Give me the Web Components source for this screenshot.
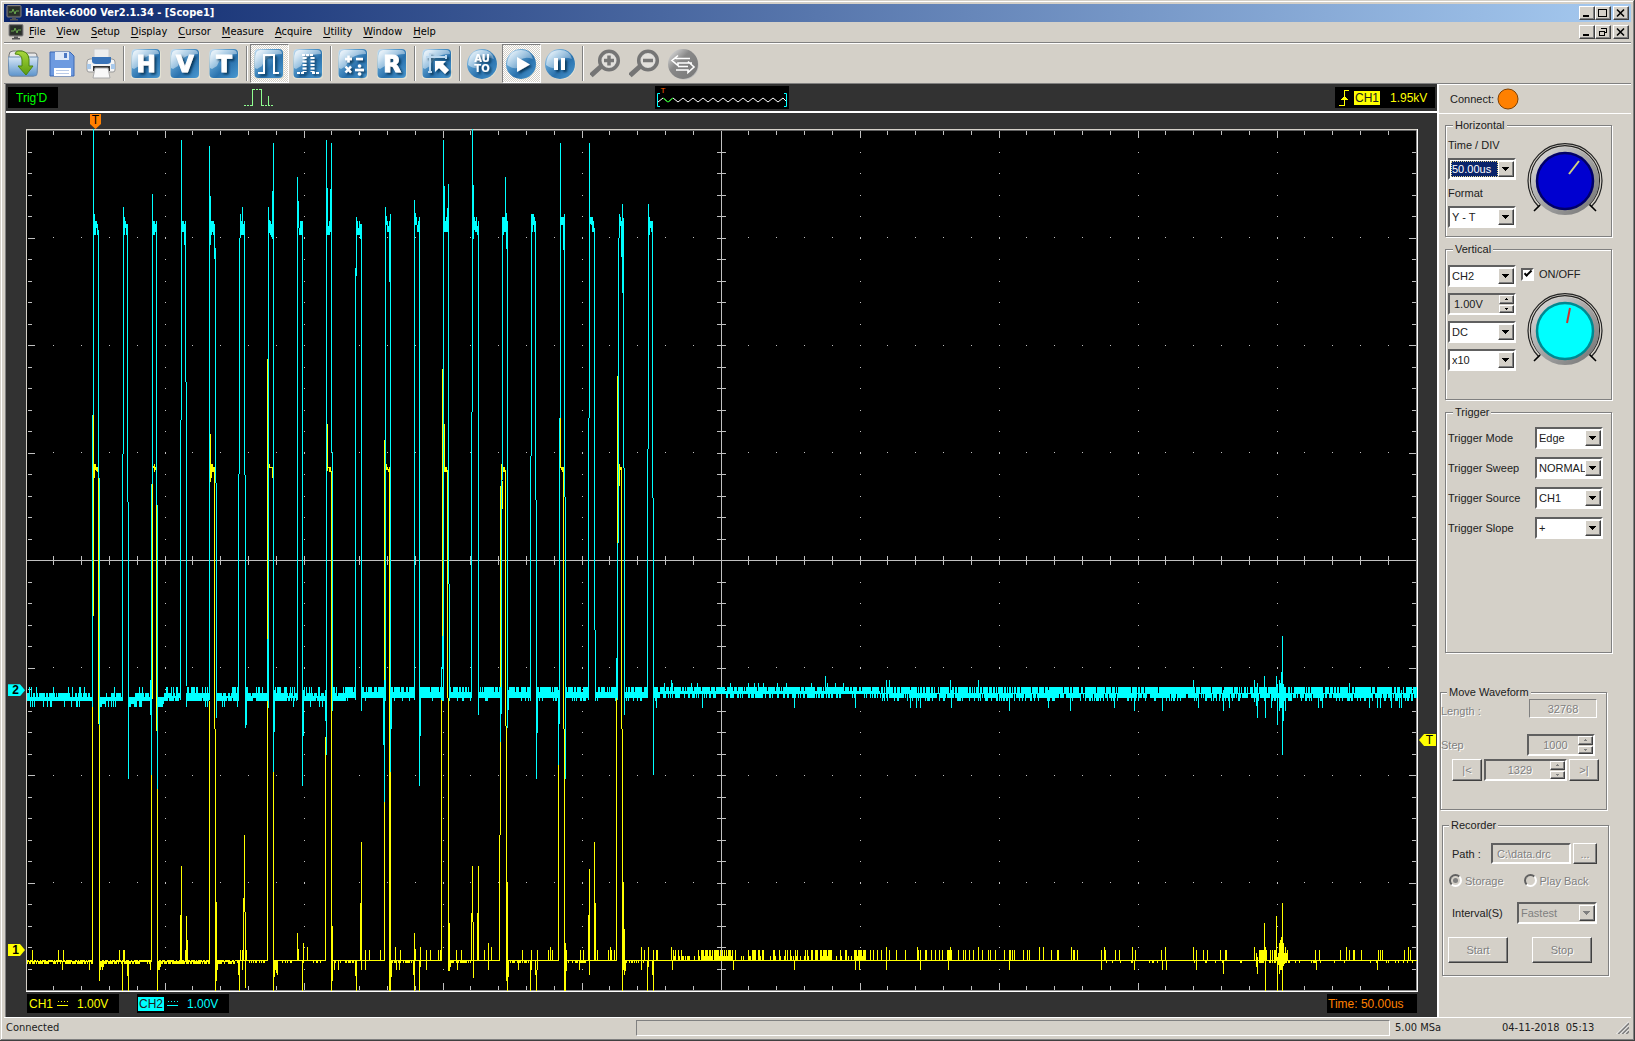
<!DOCTYPE html>
<html lang="en">
<head>
<meta charset="utf-8">
<title>Hantek-6000 Ver2.1.34 - [Scope1]</title>
<style>
html, body { margin: 0; height: 100%; }
body { background: #d4d0c8; overflow: hidden; }
</style>
</head>
<body>
<app-window></app-window>
<script>
const BASE = `
*, *::before, *::after { box-sizing: border-box; }
:host { display: block; box-sizing: border-box; --face: #d4d0c8; --ui: "DejaVu Sans Condensed", "DejaVu Sans", sans-serif; --arial: "Liberation Sans", Arial, sans-serif; }
button, input, select { font: inherit; color: inherit; margin: 0; border-radius: 0; outline: 0; }
button { display: flex; align-items: center; justify-content: center; padding: 0; border: 0; background: none; }
svg { display: block; }
.raised { background: var(--face); border: 1px solid; border-color: #fff #404040 #404040 #fff; box-shadow: inset -1px -1px #808080; }
.sunken { border: 2px solid; border-color: #606060 #fff #fff #606060; }
.off { color: #808080; text-shadow: 1px 1px #fff; }
`;
function define(name, css, html, ready) {
  customElements.define(name, class extends HTMLElement {
    connectedCallback() {
      if (this.shadowRoot) return;
      const root = this.attachShadow({ mode: 'open' });
      root.innerHTML = '<style>' + BASE + css + '</style>' + (typeof html === 'function' ? html(this) : html);
      if (ready) ready(root, this);
    }
  });
}

/* ---------- window chrome ---------- */
const MONITOR = `<svg width="16" height="16" viewBox="0 0 16 16"><rect x="1" y="0.500" width="14" height="11.500" rx="1" fill="#3a3a3a" stroke="#808080"/><rect x="2.500" y="2" width="11" height="8.500" fill="#283028"/><path d="M3 7h3l1-3 2 5 1-3h3" stroke="#6aa84f" fill="none"/><path d="M6 12.500h4v1.500h2v1.500H4V14h2z" fill="#555"/></svg>`;

define('window-buttons', `
:host { display: flex; }
button { width: 16px; height: 14px; }
button:last-child { margin-left: 2px; }`,
el => `
<button class="raised" aria-label="Minimize"><svg width="12" height="10"><path d="M2 8h6" stroke="#000" stroke-width="2"/></svg></button>
<button class="raised" aria-label="Restore"><svg width="12" height="10" shape-rendering="crispEdges" fill="none" stroke="#000">${el.hasAttribute('child')
  ? '<path d="M4.500 1.500h5v4h-2M4 1h6M2.500 4.500h5v4h-5zM2 4h6"/>' : '<path d="M1.500 1.500h8v7h-8zM1 1h9"/>'}</svg></button>
<button class="raised" aria-label="Close"><svg width="12" height="10"><path d="M2 1.500l7 7M9 1.500l-7 7" stroke="#000" stroke-width="1.600"/></svg></button>`);

define('title-bar', `
:host { display: flex; align-items: center; height: 18px; padding: 0 2px; background: linear-gradient(90deg, #0a246a, #a6caf0); color: #fff; font: bold 11px/18px var(--ui); }
span { flex: 1; margin-left: 3px; }`,
`${MONITOR}<span><slot></slot></span><window-buttons></window-buttons>`);

define('menu-bar', `
:host { display: flex; align-items: center; height: 20px; padding: 0 2px 0 4px; font: 11px/20px var(--ui); color: #000; }
nav { display: flex; flex: 1; gap: 11px; margin-left: 5px; }
nav button { line-height: 20px; display: block; }
u { text-underline-offset: 2px; text-decoration-thickness: 1px; }`,
`${MONITOR}<nav>${['File', 'View', 'Setup', 'Display', 'Cursor', 'Measure', 'Acquire', 'Utility', 'Window', 'Help']
  .map(t => `<button><u>${t[0]}</u>${t.slice(1)}</button>`).join('')}</nav><window-buttons child></window-buttons>`);

/* ---------- toolbar ---------- */
const DEFS = `<defs>
<linearGradient id="b" x1="0" y1="0" x2="1" y2="1"><stop offset="0" stop-color="#cfe3f3"/><stop offset=".3" stop-color="#5c9fd0"/><stop offset=".6" stop-color="#2a72ad"/><stop offset="1" stop-color="#4b9ad2"/></linearGradient>
<linearGradient id="s" x1="0" y1="0" x2="1" y2="1"><stop offset="0" stop-color="#fff" stop-opacity=".8"/><stop offset="1" stop-color="#fff" stop-opacity=".1"/></linearGradient>
<linearGradient id="g" x1="0" y1="0" x2="0" y2="1"><stop offset="0" stop-color="#a8d83c"/><stop offset="1" stop-color="#5c9c10"/></linearGradient>
<linearGradient id="f" x1="0" y1="0" x2="0" y2="1"><stop offset="0" stop-color="#d8e8f6"/><stop offset="1" stop-color="#5c94cc"/></linearGradient>
<linearGradient id="k" x1="0" y1="0" x2="1" y2="1"><stop offset="0" stop-color="#eee"/><stop offset=".4" stop-color="#888"/><stop offset="1" stop-color="#777"/></linearGradient>
<filter id="d" x="-20%" y="-20%" width="150%" height="150%"><feDropShadow dx="2" dy="2" stdDeviation="1.300" flood-color="#06294a" flood-opacity=".8"/></filter></defs>`;
const icon = body => `<svg width="32" height="32" viewBox="1 0 32 32">${DEFS}${body}</svg>`;
const tile = body => icon(`<path d="M4 31q-3 0-3-3V5l3-3 22-1q5 0 5 5v22q0 3-3 3z" fill="#e4e2d4"/><rect x="1.500" y="1" width="28.500" height="29" rx="4" fill="url(#b)"/><path d="M2 12Q2 2 7 2h18q4 0 4 4-16 0-20 12l-5 3-2-1z" fill="url(#s)"/><g filter="url(#d)" fill="#fff" stroke="none">${body}</g>`);
const ball = body => icon(`<circle cx="17" cy="17" r="14.500" fill="#e4e2d4"/><circle cx="16" cy="16" r="15" fill="url(#b)"/><path d="M2 17Q3 2 16 2q10 0 12 9-14-5-16 9-4 1-10-3z" fill="url(#s)"/><g filter="url(#d)" fill="#fff">${body}</g>`);
const letter = c => tile(`<text x="16" y="24" text-anchor="middle" font-family="DejaVu Sans" font-weight="bold" font-size="23" stroke="#fff" stroke-width="1">${c}</text>`);
const lens = sign => icon(`<path d="M2 27.500L12.500 18" stroke="#757575" stroke-width="5"/><circle cx="20" cy="12.500" r="9.300" fill="#d8d8d6" stroke="#757575" stroke-width="3.500"/><circle cx="20" cy="12.500" r="6.800" fill="#e2e0dc"/><path d="${sign}" stroke="#777" stroke-width="3.500"/>`);
const TOOLS = [
  ['Open', icon(`<path d="M2 7q0-4 4-4h9l3 2h10q2 0 2 3v16q0 4-4 4H4q-2 0-2-4z" fill="#e8e8e8" stroke="#777"/><path d="M1 9h30l-1 17q0 2-3 2H5q-3 0-3-2z" fill="url(#f)" stroke="#6c8cb0"/><path d="M11 3q10-1 11 8v7h4l-7 9-8-9h4v-6q0-6-7-6 1-3 3-3z" fill="url(#g)" stroke="#4c8410"/>`)],
  ['Save', icon(`<path d="M4 4h20l4 4v20H4z" fill="#6d9ae0" stroke="#3c68b4"/><path d="M9 4h14v8H9z" fill="#dfe9f8"/><path d="M18 5h3v5h-3z" fill="#4c78c4"/><path d="M8 20h17v8H8z" fill="#fff"/><path d="M10 22.500h13M10 25.500h13" stroke="#b9cbe8"/>`)],
  ['Print', icon(`<path d="M9 1h15v10H9z" fill="#eee" stroke="#ccc"/><path d="M2 14q0-3 3-3h22q3 0 3 3v8q0 2-2 2H4q-2 0-2-2z" fill="#f4f4f4" stroke="#999"/><path d="M7 9h19v4q0 3-4 3H11q-4 0-4-3z" fill="#3973b8"/><path d="M8 18h17v5H8z" fill="#333"/><path d="M10 20h13l2 10H8z" fill="#f8f8f8" stroke="#aaa"/><path d="M2 16h4v5H2zM26 16h4v5h-4z" fill="#a8c8ea"/>`)],
  '|',
  ['Horizontal', letter('H')], ['Vertical', letter('V')], ['Trigger', letter('T')],
  '|',
  ['Line', tile('<path d="M5 25h6V7h10v18h5" fill="none" stroke="#fff" stroke-width="2"/>'), 1],
  ['Dots', tile('<path d="M5 25h7M20 25h7M10 7h12" stroke="#fff" stroke-width="2" stroke-dasharray="3 1"/><path d="M12.500 9v15M20.500 9v15" stroke="#fff" stroke-width="4" stroke-dasharray="2 1.500"/>')],
  '|',
  ['Math', tile('<path d="M8 11h7M11.500 7.500v7M19 11h7M8.500 18.500l5.500 6M14 18.500l-5.500 6M18 22h9" stroke="#fff" stroke-width="2.500" fill="none"/><circle cx="22.500" cy="18" r="1.800"/><circle cx="22.500" cy="26" r="1.800"/>')],
  ['Reference', letter('R')],
  '|',
  ['Cursor', tile('<path d="M5 9h20M9 5v20M25 7v4M7 24h4" stroke="#bcd8ee" stroke-width="2"/><path d="M14 13h11l-3 3 6 6-4 4-6-6-4 4z"/>')],
  '|',
  ['Auto', ball('<text font-family="DejaVu Sans" font-weight="bold" font-size="10" text-anchor="middle"><tspan x="16" y="14">AU</tspan><tspan x="16" y="24">TO</tspan></text>')],
  ['Run', ball('<path d="M12 9l13 7.500L12 24z"/>'), 1],
  ['Pause', ball('<path d="M10 10h4v12h-4zM17 10h4v12h-4z"/>')],
  '|',
  ['Zoom in', lens('M15 12.500h10M20 7.500v10')], ['Zoom out', lens('M15 12.500h10')],
  ['Swap', icon('<circle cx="17" cy="17" r="14.500" fill="#bbb"/><circle cx="16" cy="16" r="15" fill="url(#k)"/><path d="M11 7.500L5 12.500l6 5V15h14M9 10.500h14M21 13.500l6 5.500-6 5.500V22H9M11 18.500h10" fill="none" stroke="#fff" stroke-width="1.600"/>')]
];
define('tool-bar', `
:host { display: flex; flex: none; height: 41px; border-top: 1px solid #808080; box-shadow: inset 0 1px #fff; padding-top: 1px; }
button { width: 39px; height: 39px; border: 1px solid transparent; }
button.on { border-color: #808080 #fff #fff #808080; background: repeating-conic-gradient(#fff 0 25%, #d4d0c8 0 50%) 0 0 / 2px 2px; }
i { width: 6px; margin: 2px 0; display: flex; justify-content: center; }
i::before { content: ""; width: 2px; background: linear-gradient(90deg, #808080 50%, #fff 50%); }`,
TOOLS.map(t => t === '|' ? '<i></i>' : `<button aria-label="${t[0]}"${t[2] ? ' class="on"' : ''}>${t[1]}</button>`).join(''));

/* ---------- form controls ---------- */
define('combo-box', `
:host { font: 11px/14px var(--arial); width: 68px; }
:host([label]) { width: auto; display: flex; align-items: center; justify-content: space-between; }
:host([stack]) { flex-direction: column; align-items: flex-start; gap: 6px; }
.box { display: flex; width: var(--combo, 68px); height: 22px; background: #fff; padding: 1px 0 1px 1px; }
:host([disabled]) .box { background: var(--face); }
select { flex: 1; min-width: 0; appearance: none; border: 0; padding: 0 0 0 1px; background: none; opacity: 1; }
:host([disabled]) select { color: #808080; }
:host([chosen]) select { background: #0a246a; color: #fff; outline: 1px dotted #e8d890; outline-offset: -1px; }
:host([chosen]) option { background: #fff; color: #000; }
svg { width: 16px; height: 16px; pointer-events: none; }`,
el => {
  const off = el.hasAttribute('disabled'), label = el.getAttribute('label');
  return `${label ? `<label for="s">${label}</label>` : ''}
<div class="box sunken"><select id="s"${label ? '' : ` aria-label="${el.getAttribute('name')}"`}${off ? ' disabled' : ''}>${el.getAttribute('options').split('|').map(o => `<option>${o}</option>`).join('')}</select>
<svg class="raised" viewBox="0 0 14 14" shape-rendering="crispEdges"><path d="M3 5h7v1h-1v1h-1v1h-1v1h-1v-1h-1v-1h-1v-1h-1z" fill="${off ? '#808080' : '#000'}"/></svg></div>`;
});

define('spin-box', `
:host { width: 68px; font: 11px/14px var(--arial); }
.box { display: flex; height: 22px; }
input { flex: 1; min-width: 0; border: 0; background: none; padding: 0 0 0 4px; }
:host([disabled]) input { text-align: center; }
.btns { width: 15px; display: flex; flex-direction: column; gap: 1px; }
.btns button { flex: 1; min-height: 0; }`,
el => {
  const off = el.hasAttribute('disabled') ? ' disabled' : '', c = off ? '#808080' : '#000';
  return `<div class="box sunken"><input class="${off ? 'off' : ''}" value="${el.getAttribute('value')}" aria-label="${el.getAttribute('name')}"${off}>
<div class="btns"><button class="raised" aria-label="Up"${off}><svg width="5" height="2" shape-rendering="crispEdges"><path d="M2 0h1v1h1v1h-3v-1h1z" fill="${c}"/></svg></button>
<button class="raised" aria-label="Down"${off}><svg width="5" height="2" shape-rendering="crispEdges"><path d="M1 0h3v1h-1v1h-1v-1h-1z" fill="${c}"/></svg></button></div></div>`;
});

define('group-box', `
:host { width: 167px; }
fieldset { margin: 0; min-width: 0; padding: 0 0 0 var(--inset, 2px); border: 1px solid #808080; box-shadow: 1px 1px #fff, inset 1px 1px #fff; font: 11px/14px var(--arial); }
legend { margin-left: var(--legend, 5px); padding: 0 2px; background: var(--face); height: 14px; }`,
el => `<fieldset><legend>${el.getAttribute('caption')}</legend><slot></slot></fieldset>`);

define('knob-dial', `:host { width: 78px; height: 78px; }`, el => `
<svg width="78" height="78" viewBox="0 0 78 78"><defs><linearGradient id="m" x1="0" y1="0" x2="1" y2="1"><stop offset="0" stop-color="#e0e0e0"/><stop offset=".5" stop-color="#a4a4a4"/><stop offset="1" stop-color="#707070"/></linearGradient></defs>
<path d="M13 65A37 37 0 1 1 65 65M15 63A34.500 34.500 0 1 1 63 63" fill="none" stroke="#222" stroke-width="1.200"/>
<path d="M14 63l-6 6M63 62l7 7" stroke="#000" stroke-width="1.600"/>
<circle cx="39" cy="39" r="34" fill="url(#m)"/><circle cx="39" cy="39" r="28" fill="${el.getAttribute('color')}" stroke="${el.getAttribute('rim')}" stroke-width="2.500"/>
<path d="${el.getAttribute('hand')}" stroke="${el.getAttribute('ink')}" stroke-width="2"/></svg>`);

/* ---------- side panel ---------- */
define('side-panel', `
:host { width: 194px; flex: none; border-left: 2px solid #fff; font: 11px/14px var(--arial); color: #202020; }
.connect { display: flex; align-items: center; gap: 3px; height: 30px; padding-left: 11px; border-top: 1px solid #fff; border-bottom: 1px solid #fff; font-size: 11px; }
.groups { display: flex; flex-direction: column; padding: 4px 0 0 6px; gap: 5px; }
.cols { display: flex; gap: 5px; }
.stack { display: flex; flex-direction: column; gap: 6px; }
.h { padding: 6px 0 8px; }
.h knob-dial { margin: 4px 0 0 5px; }
.v { padding: 9px 0 28px; }
.v .side { padding-top: 2px; }
.v label { display: flex; align-items: center; gap: 5px; margin-bottom: 11px; }
.v knob-dial { margin-left: 5px; }
.tick { appearance: none; width: 13px; height: 13px; background: #fff; display: grid; place-items: center; }
.tick:checked::after { content: ""; width: 8px; height: 4px; border: solid #000; border-width: 0 0 2px 2px; transform: rotate(-45deg) translate(1px, -1px); }
.t { display: flex; flex-direction: column; gap: 8px; padding: 8px 8px 113px 0; }
.move { margin: 27px 0 3px -5px; --inset: 0px; --legend: 6px; }
.rec { margin-left: -3px; --inset: 0px; --legend: 6px; }
.row { display: flex; align-items: center; justify-content: space-between; }
.m .row:first-child { height: 19px; padding-right: 9px; }
.m .row:first-child label { padding-top: 4px; }
.m .row:nth-child(2) { margin-top: 16px; padding-right: 11px; }
.m .row:nth-child(3) { margin: 3px 7px 28px 11px; }
.len { width: 68px; height: 19px; text-align: center; background: none; border: 1px solid; border-color: #808080 #fff #fff #808080; }
.m button { width: 30px; height: 22px; }
.m .wide { width: 83px; }
.r { padding: 11px 11px 12px 9px; display: flex; flex-direction: column; }
.path { height: 21px; width: 80px; background: none; padding: 0 0 0 4px; }
.path + button { width: 24px; height: 21px; margin-left: -8px; }
.radios { display: flex; gap: 20px; height: 15px; margin: 9px 0 14px -3px; }
.radios label { display: flex; align-items: center; gap: 3px; }
.radios input { appearance: none; width: 13px; height: 13px; border: 2px solid; border-color: #606060 #fff #fff #606060; border-radius: 50%; display: grid; place-items: center; }
.radios input:checked::after { content: ""; width: 5px; height: 5px; border-radius: 50%; background: #808080; }
.r combo-box { --combo: 80px; }
.acts { display: flex; gap: 24px; margin: 13px 0 0 -4px; }
.acts button { width: 60px; height: 26px; }`,
`<div class="connect">Connect:<svg width="22" height="22"><circle cx="11" cy="11" r="10" fill="#ff8000" stroke="#804000"/></svg></div>
<div class="groups">
<group-box caption="Horizontal"><div class="cols h"><div class="stack">
<combo-box stack chosen label="Time / DIV" options="50.00us|100.0us|200.0us"></combo-box>
<combo-box stack label="Format" options="Y - T|X - Y"></combo-box></div>
<knob-dial color="#0000d0" rim="#000068" ink="#d0d080" hand="M43 32L53 19"></knob-dial></div></group-box>
<group-box caption="Vertical"><div class="cols v"><div class="stack">
<combo-box name="Channel" options="CH2|CH1"></combo-box>
<spin-box name="Volts per division" value="1.00V"></spin-box>
<combo-box name="Coupling" options="DC|AC|GND"></combo-box>
<combo-box name="Probe" options="x10|x1|x100"></combo-box></div>
<div class="side"><label><input class="tick sunken" type="checkbox" checked>ON/OFF</label>
<knob-dial color="#00ffff" rim="#008890" ink="#d03030" hand="M41 31L44 16"></knob-dial></div></div></group-box>
<group-box caption="Trigger"><div class="t">
<combo-box label="Trigger Mode" options="Edge|Pulse|Video"></combo-box>
<combo-box label="Trigger Sweep" options="NORMAL|AUTO|SINGLE"></combo-box>
<combo-box label="Trigger Source" options="CH1|CH2"></combo-box>
<combo-box label="Trigger Slope" options="+|-"></combo-box></div></group-box>
<group-box class="move" caption="Move Waveform"><div class="m">
<div class="row"><label class="off" for="len">Length :</label><input id="len" class="len off" value="32768" disabled></div>
<div class="row"><span class="off">Step</span><spin-box name="Step" value="1000" disabled></spin-box></div>
<div class="row"><button class="raised off" disabled>|&lt;</button><spin-box class="wide" name="Position" value="1329" disabled></spin-box><button class="raised off" disabled>&gt;|</button></div>
</div></group-box>
<group-box class="rec" caption="Recorder"><div class="r">
<div class="row"><label for="path">Path :</label><input id="path" class="path sunken off" value="C:\\data.drc" disabled><button class="raised off" disabled>...</button></div>
<div class="radios off"><label><input type="radio" name="mode" checked disabled>Storage</label><label><input type="radio" name="mode" disabled>Play Back</label></div>
<combo-box label="Interval(S)" options="Fastest" disabled></combo-box>
<div class="acts"><button class="raised off" disabled>Start</button><button class="raised off" disabled>Stop</button></div>
</div></group-box></div>`);

/* ---------- oscilloscope ---------- */
/* Columns of each trace as "x top bottom", one sample column per entry. */
const CH2 = `92 415 700,93 129 415,94 214 235,95 221 235,96 221 228,97 224 235,98 230 478,99 478 725,
122 454 700,123 207 454,124 217 235,125 221 228,126 224 235,127 224 502,128 502 779,
150 680 715,151 484 775,152 194 484,153 221 235,154 221 235,155 224 232,156 221 505,157 505 789,
180 420 700,181 140 420,182 221 232,183 221 232,184 224 245,185 221 382,186 382 686,
209 146 700,210 196 245,211 221 235,212 221 232,213 221 235,214 224 259,215 248 483,216 483 718,
238 474 700,239 238 474,240 214 238,241 221 235,242 207 235,243 224 235,244 221 475,245 475 728,246 690 725,
267 639 700,268 207 708,269 220 233,270 221 235,271 224 237,272 191 239,273 143 772,274 690 732,
297 177 700,298 201 228,299 228 235,300 221 235,301 221 235,302 221 786,303 690 736,
325 690 721,326 140 755,327 188 235,328 226 235,329 221 235,330 189 232,331 143 452,332 452 711,
355 268 700,356 217 276,357 221 235,358 228 235,359 221 235,360 224 239,361 224 711,
383 690 745,384 680 802,385 207 701,386 216 225,387 221 232,388 226 232,389 221 282,390 214 772,391 690 729,
414 200 700,415 213 225,416 217 225,417 225 232,418 221 232,419 217 786,420 690 736,
441 667 700,442 636 669,443 140 701,444 186 232,445 221 232,446 217 232,447 208 232,448 184 584,449 584 701,
471 412 694,472 129 412,473 185 239,474 217 230,475 221 232,476 217 232,477 226 235,478 221 715,
500 687 742,501 480 714,502 217 480,503 217 235,504 217 232,505 177 232,506 213 249,507 221 728,508 690 710,
530 456 694,531 214 456,532 214 232,533 214 225,534 217 232,535 221 500,536 500 779,537 690 733,
558 690 765,559 418 724,560 143 418,561 217 225,562 217 225,563 217 250,564 214 497,565 497 779,
588 418 700,589 143 418,590 217 224,591 217 225,592 217 232,593 221 232,594 228 630,595 630 701,
616 658 698,617 543 700,618 238 543,619 214 238,620 217 226,621 221 257,622 204 293,623 218 468,624 468 715,
647 449 694,648 204 449,649 217 235,650 221 228,651 221 232,652 221 498,653 498 775,656 690 708,
671 680 694,702 690 708,794 690 708,825 676 694,855 690 708,886 680 694,889 680 694,910 690 708,916 690 708,920 690 708,950 680 698,951 690 708,978 680 694,1009 690 711,1048 690 708,1070 690 711,1114 690 708,1134 690 711,1162 690 711,1193 680 694,1198 690 708,1223 690 711,1229 690 708,
1254 680 702,1256 690 706,1257 683 718,1264 676 694,1265 690 718,1271 690 708,1276 676 694,1277 684 725,1279 680 711,1280 683 708,1281 672 708,1282 636 755,1283 684 721,1284 687 700,1285 687 711,1318 690 708,1322 690 708,1349 683 698,1369 690 708,1377 690 708,1380 690 708,1391 690 708,1399 690 708,1401 690 708`;
const CH1 = `92 701 961,93 415 616,94 464 478,95 464 470,96 467 471,97 467 472,98 478 724,99 725 981,100 961 970,101 961 967,102 961 970,103 961 967,
151 775 961,152 484 699,153 466 468,154 464 472,155 467 470,156 505 731,157 789 991,158 961 970,159 961 970,160 961 967,
209 701 961,210 434 482,211 464 478,212 464 472,213 467 472,214 467 729,215 729 991,216 902 981,217 961 970,
267 359 961,268 464 467,269 464 468,270 467 468,271 467 468,272 467 478,273 772 991,274 961 977,275 961 970,276 961 973,277 961 975,
325 737 961,327 424 471,328 467 468,329 467 472,330 467 472,331 471 991,332 926 981,334 961 970,338 961 970,
384 440 961,386 464 470,387 467 470,388 469 472,389 467 991,390 772 991,391 961 977,
441 698 961,442 369 636,444 424 472,445 467 472,446 467 472,447 470 698,448 698 971,449 923 971,450 961 967,
499 835 961,500 486 835,501 464 480,502 481 509,503 467 472,504 467 472,505 470 726,506 726 981,507 882 991,508 961 977,
558 765 961,560 418 468,561 467 470,562 467 472,563 467 729,564 729 991,565 943 991,566 950 971,
616 698 961,617 376 543,619 464 486,620 467 470,621 467 729,622 729 991,623 882 970,624 929 975,625 961 971,
32 950 961,58 950 961,63 950 961,62 961 970,89 961 970,119 950 961,123 950 961,124 950 961,122 961 991,127 961 976,128 961 991,150 961 970,
180 915 961,181 866 961,186 916 961,185 950 961,187 940 961,238 961 975,239 961 991,240 950 961,242 950 970,243 898 961,244 835 912,245 912 988,246 950 961,
297 933 961,298 949 961,302 961 991,303 943 961,307 947 961,355 961 976,356 961 991,360 903 961,361 842 970,365 950 970,369 950 961,380 950 961,
395 947 961,396 961 970,400 950 961,399 961 970,413 961 975,414 933 991,415 949 961,419 961 991,420 947 967,426 950 970,430 950 961,438 950 961,440 950 961,456 950 961,457 961 970,461 950 961,
471 913 961,472 866 922,473 922 978,477 913 961,478 866 961,484 950 961,488 943 970,491 947 961,522 950 961,518 961 970,530 961 991,531 950 970,535 961 975,536 970 991,537 950 970,548 950 961,550 947 961,552 950 961,
580 950 961,583 950 961,579 961 970,588 915 961,589 869 975,594 842 961,595 903 961,597 950 961,608 950 961,610 947 961,611 950 961,614 950 961,641 947 970,644 950 961,647 961 991,648 947 967,652 961 975,653 950 991,656 950 961,657 950 961,
671 947 961,672 961 970,733 961 970,794 961 970,855 961 970,859 961 970,870 950 961,873 950 961,877 950 961,881 950 961,886 947 970,889 950 961,896 950 961,905 950 961,917 947 961,918 950 961,920 950 970,925 950 961,926 950 961,931 950 961,935 950 961,939 950 961,942 950 961,947 950 961,948 950 970,949 950 961,950 947 961,951 950 961,958 950 961,963 950 961,965 950 961,969 950 961,973 950 961,978 947 961,982 950 961,988 950 961,990 950 961,995 950 961,1004 950 961,1009 950 970,1010 950 961,1012 950 961,1014 950 961,1023 950 961,1027 950 961,1029 950 961,1039 947 961,1043 947 961,1051 950 961,1057 950 961,1058 950 961,1071 947 961,1073 950 961,1074 950 961,1077 950 961,1101 950 970,1104 947 961,1105 950 961,1115 950 961,1119 950 961,1132 947 961,1134 961 970,1135 950 961,1161 950 961,1162 961 970,1165 947 961,1166 961 970,1193 947 961,1196 950 970,1203 950 961,1207 950 961,1220 950 961,1223 961 974,1225 950 961,1226 950 961,
1254 947 961,1256 953 967,1257 957 974,1259 950 963,1260 950 963,1261 950 963,1262 950 963,1263 950 963,1264 923 961,1265 947 991,1266 950 961,1270 950 963,1272 950 963,1274 950 963,1275 950 963,1276 916 961,1277 957 991,1278 953 965,1279 943 974,1280 940 970,1281 937 970,1282 903 991,1283 943 966,1284 953 964,1285 947 963,1286 953 963,1287 950 961,1315 950 961,1316 961 970,1319 950 961,1340 950 961,1346 947 961,1349 950 961,1353 950 961,1354 950 961,1361 950 961,1377 961 970,1378 950 961,1380 950 961,1382 950 961,1404 950 961,1408 947 961,1410 950 961`;
const HIGH2 = [[93, 98], [123, 127], [152, 156], [181, 185], [209, 215], [239, 244], [268, 272], [297, 301], [327, 331], [356, 360], [385, 389], [414, 418], [443, 448], [472, 477], [502, 506], [531, 535], [560, 564], [589, 594], [618, 623], [648, 652]];
const HIGH1 = [[93, 98], [152, 156], [210, 214], [268, 272], [326, 330], [385, 388], [442, 447], [500, 505], [559, 563], [617, 621]];
const inside = (list, x) => list.some(([a, b]) => x >= a && x <= b);
const bar = (x, a, b) => `M${x} ${a}h1V${b}h-1z`;
const columns = s => s.split(',').map(c => bar(...c.trim().split(' ').map(Number))).join('');

function traces() {
  let seed = 7;
  const rnd = () => (seed = (seed * 1103515245 + 12345) % 2147483648) / 2147483648;
  let c1 = columns(CH1), c2 = columns(CH2);
  for (let x = 27; x < 1417; x++) {
    if (!inside(HIGH2, x)) {
      let top, bottom, r = rnd(), q = rnd();
      if (x < 165) { top = r < .1 ? 687 : r < .7 ? 693 : 697; bottom = q < .2 ? 707 : 701; }
      else if (x < 345) { top = r < .35 ? 687 : r < .85 ? 693 : 696; bottom = q < .06 ? 707 : q < .2 ? 698 : 701; }
      else if (x < 660) { top = r < .75 ? 687 : 692; bottom = q < .2 ? 701 : 698; }
      else if (x < 880) { top = r < .06 ? 683 : r < .85 ? 687 : 691; bottom = q < .45 ? 698 : 694; }
      else { top = r < .8 ? 687 : 693; bottom = q < .25 ? 701 : q < .85 ? 698 : 694; }
      const after = HIGH2.find(h => x > h[1] && x < h[1] + 8);
      if (after && x < 165) { top = 697; bottom = q < .5 ? 707 : 704; }
      c2 += bar(x, top, bottom);
    }
    if (!inside(HIGH1, x)) {
      const q = rnd(), r = rnd();
      let top = 960, bottom = 961;
      if (x < 235) { bottom = q < .75 ? 964 : 962; if (q > .3) top = 960; else top = 961; }
      else if (x < 345) bottom = q < .2 ? 963 : 961;
      else if (x < 650) { const near = HIGH1.some(h => x > h[1] && x < h[1] + 24); bottom = near && q < .7 ? 963 : 961; }
      else if (x > 672 && x < 866) { const dense = x > 698 && x < 732 || x > 820 && x < 832 || x > 854; top = r < (dense ? .65 : .3) ? 950 : r < (dense ? .95 : .5) ? 956 : 960; }
      else if (x > 1090 && q < .12) bottom = 963;
      c1 += bar(x, top, bottom);
    }
  }
  return [c1, c2];
}
function graticule() {
  let d = bar(721, 131, 990) + 'M27 560H1416v1H27z';
  for (let i = 1; i < 50; i++) {
    const x = Math.floor(26 + 27.8 * i), big = i % 5 === 0, n = big ? 7 : 4;
    d += bar(x, 131, 131 + n) + bar(x, 990 - n, 990) + bar(x, 556, 565);
    for (const y of [237, 345, 452, 667, 775, 882]) d += bar(x, y, y + 1);
  }
  for (let j = 1; j < 40; j++) {
    if (j === 20) continue;
    const y = Math.floor(130.5 + 21.5 * j), n = j % 5 === 0 ? 7 : 4;
    d += `M28 ${y}h${n}v1h-${n}zM${1416 - n} ${y}h${n}v1h-${n}zM717 ${y}h9v1h-9z`;
    for (let i = 1; i < 10; i++) d += bar(26 + 139 * i, y, y + 1);
  }
  return d;
}
define('scope-plot', `svg { width: 100%; height: 100%; }`, () => {
  const [c1, c2] = traces();
  return `<svg viewBox="26 129 1392 863" preserveAspectRatio="none" shape-rendering="crispEdges" role="img" aria-label="Channel traces">
<path d="M26 129h1392v863H26z" fill="#000"/>
<path d="M26 130h1391v1H27v860h-1z" fill="#606060"/><path d="M26 129h1392v1H27v862h-1z" fill="#d4d0c8"/>
<path d="M1416 130h1v861H27v-1h1389z" fill="#909090"/><path d="M1417 129h1v863H26v-1h1391z" fill="#fff"/>
<path d="${graticule()}" fill="#c0c0c0"/><path d="${c1}" fill="#ff0"/><path d="${c2}" fill="#0ff"/></svg>`;
});

define('mark-tag', `
:host { position: absolute; font: 12px/12px var(--arial); color: #000; text-align: center; }
:host([side=left]) { left: 2px; width: 17px; height: 12px; padding-right: 2px; clip-path: polygon(0 0, 12px 0, 100% 50%, 12px 100%, 0 100%); font-weight: bold; }
:host([side=right]) { right: 1px; width: 17px; height: 12px; padding-left: 4px; clip-path: polygon(5px 0, 100% 0, 100% 100%, 5px 100%, 0 50%); }
:host([side=top]) { top: 1px; width: 11px; height: 15px; clip-path: polygon(0 0, 100% 0, 100% 10px, 50% 100%, 0 10px); }`, '<slot></slot>');

const COUPLING = c => `<svg width="11" height="6" shape-rendering="crispEdges" stroke="${c}"><path d="M0 4.500h11"/><path d="M1 0.500h10" stroke-dasharray="1 2"/></svg>`;
const ZIGZAG = 'M3 16' + 'l5 -4l5 4'.repeat(12) + 'l5 -4l3 3';
define('scope-view', `
:host { flex: 1; min-width: 0; display: flex; flex-direction: column; margin-left: 1px; border-left: 1px solid #808080; background: #323232; font: 12px/14px var(--arial); }
.top { display: grid; grid-template-columns: 1fr auto 1fr; align-items: center; height: 29px; padding: 0 2px; border-bottom: 2px solid #fff; }
.top > div { display: flex; align-items: center; }
.chip { display: flex; align-items: center; background: #000; }
.trig { color: #0f0; height: 21px; width: 50px; padding-left: 8px; margin-right: 186px; }
.level { color: #ff0; height: 21px; width: 100px; margin-left: auto; padding-left: 3px; }
.level b, .foot b { font-weight: normal; padding: 0 1px; color: #202020; }
.level b { background: #ff0; margin: 0 10px 0 5px; }
.map { position: relative; width: 134px; height: 23px; background: #000; }
.map span { position: absolute; left: 6px; top: 0; font: 8px/10px var(--arial); color: #ff6000; }
.body { flex: 1; min-height: 0; position: relative; padding: 16px 19px 0 20px; }
scope-plot { height: 100%; }
.foot { display: flex; align-items: center; height: 25px; padding: 0 20px 2px 21px; gap: 18px; }
.foot .chip { height: 19px; width: 92px; padding-left: 1px; gap: 3px; }
.foot .chip span { margin-left: 6px; }
.foot .time { margin-left: auto; width: 90px; color: #ff8000; }`,
`<div class="top"><div><span class="chip trig">Trig'D</span>
<svg width="30" height="19" shape-rendering="crispEdges" fill="none" stroke="#90ff90"><path d="M0 17.500h8M18 17.500h12M9 1.500h8" stroke-dasharray="2 1"/><path d="M8.500 18V1M17.500 1v17M24.500 8v10"/></svg></div>
<div class="map"><svg width="134" height="23" fill="none"><path d="${ZIGZAG}" stroke="#fff"/><path d="M8 12l5 4 5-4" stroke="#0e0"/><path d="M5 7.500H2.500v13H5M129 7.500h2.500v13H129" stroke="#0ff"/></svg><span>T</span></div>
<div><span class="chip level"><svg width="11" height="18" shape-rendering="crispEdges"><path d="M1 16.500h5.500V1.500H11" fill="none" stroke="#ff0"/><path d="M6 7h1v1h1v1h1v1h1v1H3v-1h1V9h1V8h1z" fill="#ff0"/></svg><b>CH1</b>1.95kV</span></div></div>
<div class="body"><mark-tag side="top" style="left:84px;background:#ff8000">T</mark-tag>
<mark-tag side="left" style="top:65%;background:#0ff">2</mark-tag>
<mark-tag side="left" style="top:calc(95% - 4px);background:#ff0">1</mark-tag>
<mark-tag side="right" style="top:calc(71% - 3px);background:#ff0">T</mark-tag>
<scope-plot></scope-plot></div>
<div class="foot"><div class="chip" style="color:#ff0"><b style="color:#ff0">CH1</b>${COUPLING('#ff0')}<span>1.00V</span></div>
<div class="chip" style="color:#0ff"><b style="background:#0ff">CH2</b>${COUPLING('#0ff')}<span>1.00V</span></div>
<div class="chip time">Time: 50.00us</div></div>`);

define('status-bar', `
:host { display: flex; flex: none; align-items: center; height: 20px; border-top: 1px solid #fff; padding: 0 2px; font: 11px/18px var(--ui); color: #202020; }
.msg { flex: 1 1 0; max-width: 630px; }
.meter { flex: 1 1 125px; height: 16px; border: 1px solid; border-color: #808080 #fff #fff #808080; margin-right: 5px; }
.rate { width: 107px; } .when { width: 114px; white-space: pre; }`,
`<span class="msg">Connected</span><span class="meter"></span><span class="rate">5.00 MSa</span><span class="when">04-11-2018  05:13</span>
<svg width="13" height="13" style="margin-left:auto"><path d="M2 13L13 2M6 13l7-7M10 13l3-3" stroke="#808080" stroke-width="2"/><path d="M0.500 13L13 0.500M4.500 13L13 4.500M8.500 13L13 8.500" stroke="#fff"/></svg>`);

define('app-window', `
:host { height: 100vh; display: flex; flex-direction: column; background: var(--face); padding: 4px; box-shadow: inset -1px -1px #404040, inset 1px 1px #d4d0c8, inset -2px -2px #808080, inset 2px 2px #fff; }
main { flex: 1; min-height: 0; display: flex; border-top: 1px solid #808080; }`,
`<title-bar>Hantek-6000 Ver2.1.34 - [Scope1]</title-bar><menu-bar></menu-bar><tool-bar></tool-bar>
<main><scope-view></scope-view><side-panel></side-panel></main><status-bar></status-bar>`);
</script>
</body>
</html>
